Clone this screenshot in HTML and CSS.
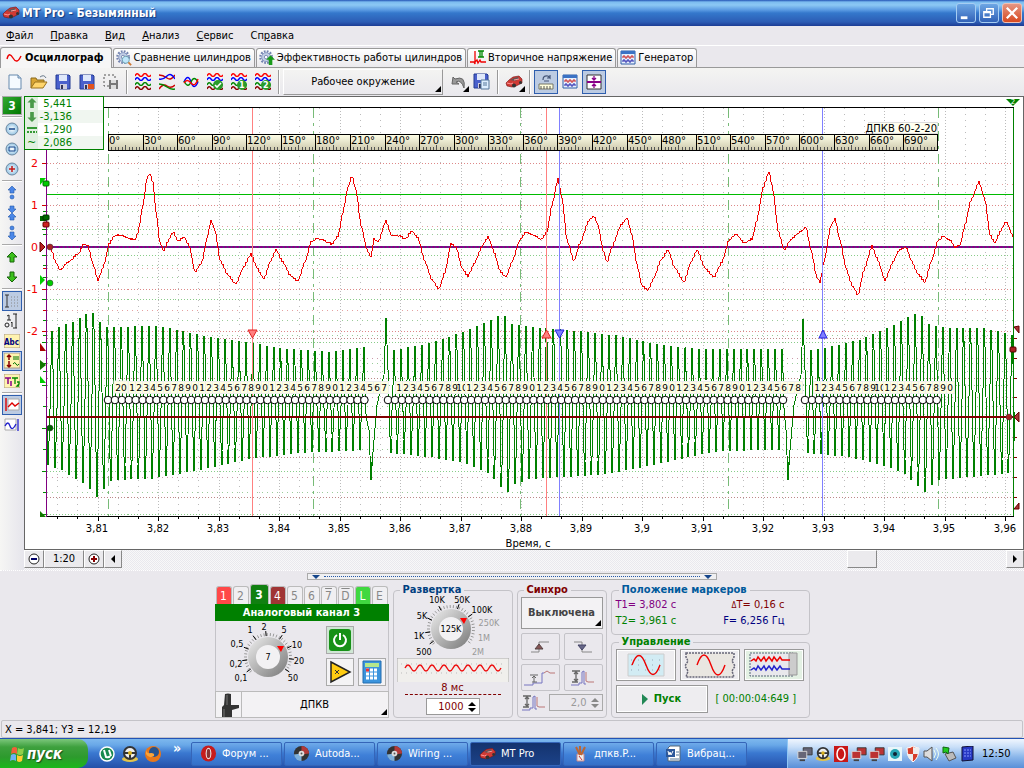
FILE: index.html
```html
<!DOCTYPE html>
<html lang="ru">
<head>
<meta charset="utf-8">
<title>MT Pro - Безымянный</title>
<link rel="stylesheet" href="styles.css">
</head>
<body>
<svg class="defs" aria-hidden="true">
  <defs>
    <linearGradient id="gGreen" x1="0" y1="0" x2="0" y2="1"><stop offset="0" stop-color="#8e8"/><stop offset="1" stop-color="#070"/></linearGradient>
    <linearGradient id="gKnob" x1="0" y1="0" x2="1" y2="1"><stop offset="0" stop-color="#eee"/><stop offset="1" stop-color="#777"/></linearGradient>
    <radialGradient id="gBall"><stop offset="0" stop-color="#fff"/><stop offset="1" stop-color="#94c4e4"/></radialGradient>
    <linearGradient id="gTooth" x1="0" y1="0" x2="0" y2="1"><stop offset="0" stop-color="#ffffe8"/><stop offset="1" stop-color="#ccc8ac"/></linearGradient>
    <symbol id="car" viewBox="0 0 18 14"><path d="M1 8l3-3 4-3 6-1 3 3v4l-6 3-4 1-5-1z" fill="#d03a34" stroke="#711" stroke-width=".6"/><path d="M5 5l4-2 4-1 1 2-4 2z" fill="#655"/><path d="M2 8l4 1 2-1M9 5l5-1" stroke="#f99" fill="none"/><circle cx="9" cy="10.500" r="2" fill="#333"/><circle cx="15.500" cy="7.500" r="1.500" fill="#333"/></symbol>
    <symbol id="gear" viewBox="0 0 18 18"><circle cx="8" cy="8" r="6.500" fill="none" stroke="#7484b0" stroke-width="2.500" stroke-dasharray="2 1.400"/><circle cx="8" cy="8" r="5" fill="#c3cfe6" stroke="#8090bd"/><circle cx="8" cy="8" r="2" fill="#fff" stroke="#7484b0"/></symbol>
    <symbol id="floppy" viewBox="0 0 16 16"><path d="M1 1h13l1 1v13H1z" fill="#4a60cc" stroke="#223a91"/><path d="M4 1h8v6H4z" fill="#dfe8fa"/><path d="M5 10h7v5H5z" fill="#ccd"/><path d="M6 11h2v4H6z" fill="#335"/></symbol>
    <symbol id="w" viewBox="0 0 16 4"><path d="M0 3Q2-1 4 2T8 2Q10-1 12 2T16 2" fill="none" stroke="currentColor" stroke-width="1.400"/></symbol>
    <symbol id="waves" viewBox="0 0 16 18"><use href="#w" y="0" width="16" height="4" color="#f00"/><use href="#w" y="4" width="16" height="4" color="#00f"/><use href="#w" y="9" width="16" height="4" color="#080"/><use href="#w" y="13" width="16" height="4" color="#800"/></symbol>
    <symbol id="genic" viewBox="0 0 16 16"><path d="M1 1h14v13H1z" fill="#e8f0fc" stroke="#2f5fa8"/><path d="M1 1h14v3H1z" fill="#3b72c4"/><path d="M3 8V6h2v2h2V6h2v2h2V6h2v2" fill="none" stroke="#c22"/><path d="M3 12v-2h2v2h2v-2h2v2h2v-2h2v2" fill="none" stroke="#22a"/></symbol>
    <symbol id="disc" viewBox="0 0 18 18"><circle cx="9" cy="9" r="8" fill="#333"/><path d="M9 1a8 8 0 0 1 8 8l-8 1z" fill="#b23a3a"/><path d="M1 10a8 8 0 0 0 8 7V9z" fill="#7eb0dc"/><circle cx="9" cy="9" r="3" fill="#ddd"/><circle cx="9" cy="9" r="1" fill="#555"/></symbol>
    <symbol id="wheel" viewBox="0 0 18 18"><ellipse cx="9" cy="14" rx="8" ry="3" fill="#e3c34b"/><circle cx="9" cy="8" r="6" fill="#eee" stroke="#333" stroke-width="2"/><path d="M3 8h12M9 8v6" stroke="#333" stroke-width="2"/><circle cx="9" cy="8" r="2" fill="#d9b120"/></symbol>
    <symbol id="net" viewBox="0 0 18 16"><path d="M7 1h10v8H7z" fill="currentColor" stroke="#333"/><path d="M1 5h10v8H1z" fill="currentColor" stroke="#ddd"/><path d="M3 15h6" stroke="#444" stroke-width="2"/></symbol>
    <symbol id="shiftarrow" viewBox="0 0 10 12"><path d="M5 0l5 5H7v6H3V5H0z"/></symbol>
    <symbol id="sync" viewBox="0 0 26 18"><path d="M1 16h8v-2h3V3" fill="none" stroke="#7774c0"/><path d="M12 3l2-1v13h2" fill="none" stroke="#7774c0"/><path d="M16 3v9l2 1h6" fill="none" stroke="#b77"/><path d="M2 2h8M2 13h6M6 3v9M4 5l2-2 2 2M4 10l2 2 2-2" fill="none" stroke="#666" stroke-width="1.300"/></symbol>
  </defs>
</svg>

<header class="titlebar">
  <svg width="18" height="14"><use href="#car"/></svg>
  <h1>MT Pro - Безымянный</h1>
  <div class="winbtns">
    <button aria-label="Свернуть"><svg viewBox="0 0 19 19"><path d="M4 13h7v3H4z" fill="#fff"/></svg></button>
    <button aria-label="Восстановить"><svg viewBox="0 0 19 19"><path d="M4 8h7v6H4zM4 9h7M7 8V5h7v6h-3M7 5h7" fill="none" stroke="#fff" stroke-width="1.400"/></svg></button>
    <button class="close" aria-label="Закрыть"><svg viewBox="0 0 19 19"><path d="M4 4l11 11M15 4L4 15" stroke="#fff" stroke-width="2.400"/></svg></button>
  </div>
</header>

<nav class="menu">
  <button><u>Ф</u>айл</button><button><u>П</u>равка</button><button><u>В</u>ид</button><button><u>А</u>нализ</button><button><u>С</u>ервис</button><button>Сп<u>р</u>авка</button>
</nav>

<div class="tabs" role="tablist">
  <button class="tab active" role="tab" aria-selected="true"><svg width="16" height="16"><path d="M1 9q2-8 6-1t8-2" fill="none" stroke="#e00" stroke-width="1.400"/></svg>Осциллограф</button>
  <button class="tab" role="tab"><svg width="16" height="16" viewBox="0 0 18 18"><use href="#gear"/><circle cx="11" cy="11" r="4" fill="#bfe6fa" stroke="#69a"/><path d="M14 14l3 3" stroke="#c73" stroke-width="2"/></svg>Сравнение цилиндров</button>
  <button class="tab" role="tab"><svg width="16" height="16" viewBox="0 0 18 18"><use href="#gear"/><use href="#shiftarrow" x="8" y="6" width="10" height="12" fill="#1a9a1a"/></svg>Эффективность работы цилиндров</button>
  <button class="tab" role="tab"><svg width="16" height="16"><path d="M0 12h4l1 2V1M5 12l2-2 1 3 2-3 1 2h5" fill="none" stroke="#e00" stroke-width="1.300"/><path d="M8 1h6M8 7h6M10 1v6M12 1v6" stroke="#080" stroke-width="1.300"/></svg>Вторичное напряжение</button>
  <button class="tab" role="tab"><svg width="16" height="16"><use href="#genic"/></svg>Генератор</button>
</div>

<div class="toolbar">
  <button class="tb" aria-label="Новый"><svg width="16" height="16"><path d="M2 1h9l3 3v11H2z" fill="#f5faff" stroke="#6789ad"/><path d="M11 1v3h3" fill="#cde" stroke="#6789ad"/></svg></button>
  <button class="tb" aria-label="Открыть"><svg width="18" height="16"><path d="M1 14V4h5l1 2h7v3" fill="#d9a533" stroke="#8a6a1c"/><path d="M1 14l4-6h12l-4 6z" fill="#ffd56b" stroke="#9a721c"/><path d="M10 3q4-3 6 1" fill="none" stroke="#678"/></svg></button>
  <button class="tb" aria-label="Сохранить"><svg width="16" height="16"><use href="#floppy"/></svg></button>
  <button class="tb" aria-label="Сохранить как"><svg width="16" height="16"><use href="#floppy"/><path d="M9 10h6v5H9z" fill="#e2531d"/></svg></button>
  <button class="tb" aria-label="Сохранить фрагмент"><svg width="16" height="16"><path d="M1 1h11v11H1z" fill="none" stroke="#555" stroke-dasharray="2 2"/><path d="M6 6h9v9H6z" fill="#777"/><path d="M8 6h5v3H8zM8 11h5v4H8z" fill="#ddd"/></svg></button>
  <i class="vsep"></i>
  <button class="tb" aria-label="Каналы"><svg width="16" height="18"><use href="#waves"/></svg></button>
  <button class="tb" aria-label="Наложение"><svg width="16" height="18"><path d="M0 2q4 0 8 3t8-3M0 16q4-6 8-3t8-1" fill="none" stroke="#c00" stroke-width="1.400"/><path d="M0 6q4 1 8-3t8 3" fill="none" stroke="#00f" stroke-width="1.400"/><path d="M0 11q4 0 8 3t8 2" fill="none" stroke="#080" stroke-width="1.400"/></svg></button>
  <button class="tb" aria-label="Совмещение"><svg width="16" height="18"><path d="M1 9q4-9 7 0t7 0" fill="none" stroke="#00f" stroke-width="1.400"/><path d="M1 8q4 8 7 1t7 0" fill="none" stroke="#080" stroke-width="1.400"/><path d="M1 10q3-5 7 0t7-4" fill="none" stroke="#f00" stroke-width="1.400"/></svg></button>
  <button class="tb" aria-label="Все каналы"><svg width="16" height="18"><use href="#waves"/><circle cx="11" cy="12" r="5" fill="#2a9b2a"/><path d="M8 12l2 2 4-4" fill="none" stroke="#fff" stroke-width="1.600"/></svg></button>
  <button class="tb" aria-label="Набор 1"><svg width="16" height="18"><use href="#waves"/><circle cx="11" cy="12" r="5" fill="#2a9b2a"/><text x="8" y="15" class="t9 wh">1</text></svg></button>
  <button class="tb" aria-label="Набор 2"><svg width="16" height="18"><use href="#waves"/><circle cx="11" cy="12" r="5" fill="#2a9b2a"/><text x="8" y="15" class="t9 wh">2</text></svg></button>
  <i class="vsep"></i>
  <button class="env corner">Рабочее окружение</button>
  <button class="tb corner gapl" aria-label="Отменить"><svg width="16" height="16"><path d="M3 3l-1 7h7L6 8q5-3 8 6 2-13-9-9z" fill="#999" stroke="#666"/></svg></button>
  <button class="tb" aria-label="Сохранить окружение"><svg width="18" height="18"><use href="#floppy" width="16" height="16"/><path d="M8 7h8v9H8z" fill="#def" stroke="#579"/><path d="M10 10h4M10 12h4" stroke="#579"/></svg></button>
  <i class="vsep"></i>
  <button class="tb corner" aria-label="Автомобиль"><svg width="18" height="14"><use href="#car"/></svg></button>
  <i class="vsep"></i>
  <button class="tb on" aria-label="Угловая линейка"><svg width="18" height="18"><path d="M6 7q0-5 5-4l2 2v-3M13 5h-3M7 8h5" fill="none" stroke="#457" stroke-width="1.200"/><path d="M2 11h14v5H2z" fill="#ffd" stroke="#776"/><path d="M4 13v3M7 13v3M10 13v3M13 13v3" stroke="#555"/></svg></button>
  <button class="tb" aria-label="Генератор"><svg width="16" height="16"><use href="#genic"/></svg></button>
  <button class="tb on" aria-label="Масштаб"><svg width="16" height="16"><path d="M1 1h14v14H1z" fill="#fff" stroke="#333"/><path d="M1 8h14" stroke="#808" stroke-width="2"/><path d="M8 2v4M8 10v4M6 4l2 2 2-2M6 12l2-2 2 2" fill="none" stroke="#808" stroke-width="1.300"/></svg></button>
</div>

<main class="work">
  <aside class="side">
    <button class="ch3">3</button><i class="hsep"></i>
    <button aria-label="Уменьшить"><svg width="14" height="14"><circle cx="7" cy="7" r="6" fill="url(#gBall)" stroke="#6c87a0"/><path d="M4 7h6" stroke="#15458a" stroke-width="1.500"/></svg></button>
    <button aria-label="По размеру"><svg width="14" height="14"><circle cx="7" cy="7" r="6" fill="url(#gBall)" stroke="#6c87a0"/><path d="M4 5h6v4H4z" fill="none" stroke="#15458a"/></svg></button>
    <button aria-label="Увеличить"><svg width="14" height="14"><circle cx="7" cy="7" r="6" fill="url(#gBall)" stroke="#6c87a0"/><path d="M4 7h6M7 4v6" stroke="#c01818" stroke-width="1.500"/></svg></button>
    <i class="hsep"></i>
    <button aria-label="Растянуть"><svg width="10" height="16" fill="#4a86e8" stroke="#2457a8" stroke-width=".6"><path d="M5 1l4 4H7v3H3V5H1z"/><circle cx="5" cy="12" r="2"/></svg></button>
    <button aria-label="Сжать"><svg width="10" height="16" fill="#4a86e8" stroke="#2457a8" stroke-width=".6"><path d="M5 8L1 4h2V1h4v3h2zM5 8l4 4H7v3H3v-3H1z"/></svg></button>
    <button aria-label="Сдвинуть"><svg width="10" height="16" fill="#4a86e8" stroke="#2457a8" stroke-width=".6"><circle cx="5" cy="3" r="2"/><path d="M5 15l-4-4h2V7h4v4h2z"/></svg></button>
    <i class="hsep"></i>
    <button aria-label="Вверх"><svg width="12" height="12"><path d="M6 1l5 5H8v5H4V6H1z" fill="#3cc01c" stroke="#17650a"/></svg></button>
    <button aria-label="Вниз"><svg width="12" height="12"><path d="M6 11L1 6h3V1h4v5h3z" fill="#3cc01c" stroke="#17650a"/></svg></button>
    <i class="hsep"></i>
    <button class="on" aria-label="Сетка"><svg width="16" height="14"><path d="M1 1h4M1 13h4M3 1v12" stroke="#333"/><path d="M7 3h8M7 6h8M7 9h8M7 12h8" stroke="#888" stroke-dasharray="1 2"/></svg></button>
    <button aria-label="Шкала"><svg width="16" height="16"><path d="M3 3l2-1v5M3 7h4M7 10l1-1v5" fill="none" stroke="#222"/><circle cx="3" cy="12" r="2" fill="none" stroke="#222"/><path d="M9 1h4M9 15h4M12 1v14" stroke="#222"/></svg></button>
    <button aria-label="Подписи"><svg width="16" height="14"><path d="M0 0h16v14H0z" fill="#fff3b0" stroke="#a98"/><text x="0" y="11" class="t8 navy">Abc</text></svg></button>
    <button class="on" aria-label="Значения"><svg width="16" height="16"><path d="M0 0h16v15H0z" fill="#fff3b0" stroke="#a98"/><path d="M5 2v5M3 4l2-2 2 2M5 8v6M3 12l2 2 2-2" fill="none" stroke="#800" stroke-width="1.500"/><path d="M9 4h6M9 6h6M9 11q2-3 3 0t3 0" fill="none" stroke="#070"/></svg></button>
    <button aria-label="Метки времени"><svg width="16" height="14"><path d="M0 0h16v14H0z" fill="#fff3b0" stroke="#a98"/><path d="M1 4h6M4 4v6M7 7v5" stroke="#808" stroke-width="1.500"/><path d="M8 4h6M11 4v6M13 8h2v2l-2 2h2" fill="none" stroke="#080" stroke-width="1.300"/></svg></button>
    <i class="hsep"></i>
    <button class="on" aria-label="Маркер слева"><svg width="16" height="16"><path d="M4 2h11v11H4z" fill="#fff" stroke="#aaa"/><path d="M2 1v13M4 10l4-4 3 3 4-3" fill="none" stroke="#d00" stroke-width="1.400"/></svg></button>
    <button aria-label="Маркер справа"><svg width="16" height="14"><path d="M1 1h11v11H1z" fill="#fff" stroke="#aaa"/><path d="M14 1v12M1 8q3-6 5 0t6-2" fill="none" stroke="#22c" stroke-width="1.300"/></svg></button>
  </aside>
  <div class="view">
    <div class="plot">
      <svg id="chart" viewBox="25 97 998 452" role="img" aria-label="Осциллограмма"></svg>
      <dl class="readout">
        <div><dt><svg width="10" height="11"><use href="#shiftarrow" fill="#4a9a4a"/></svg></dt><dd>5,441</dd></div>
        <div><dt><svg class="flip" width="10" height="11"><use href="#shiftarrow" fill="#4a9a4a"/></svg></dt><dd>-3,136</dd></div>
        <div><dt><svg width="10" height="8"><path d="M0 2h10" stroke="#393" stroke-width="2"/><path d="M0 6h10" stroke="#393" stroke-width="2" stroke-dasharray="2 1"/></svg></dt><dd>1,290</dd></div>
        <div><dt>~</dt><dd>2,086</dd></div>
      </dl>
    </div>
    <div class="scroll">
      <button aria-label="Мельче"><svg width="14" height="14"><circle cx="7" cy="7" r="5" fill="#fff" stroke="#222"/><path d="M4 7h6" stroke="#006" stroke-width="2"/></svg></button>
      <button class="ratio">1:20</button>
      <button aria-label="Крупнее"><svg width="14" height="14"><circle cx="7" cy="7" r="5" fill="#fff" stroke="#222"/><path d="M4 7h6M7 4v6" stroke="#800" stroke-width="2"/></svg></button>
      <button aria-label="Влево"><svg width="8" height="8"><path d="M6 0v8L2 4z"/></svg></button>
      <div class="track"><div class="thumb"></div></div>
      <button aria-label="Вправо"><svg width="8" height="8"><path d="M2 0v8l4-4z"/></svg></button>
    </div>
  </div>
</main>

<div class="splitter"><button aria-label="Свернуть панель"><svg width="8" height="4"><path d="M0 0h8L4 4z" fill="#15458a"/></svg><i></i><svg width="8" height="4"><path d="M0 0h8L4 4z" fill="#15458a"/></svg></button></div>

<section class="controls">
  <div class="channel">
    <div class="chtabs">
      <button class="c1">1</button><button>2</button><button class="c3">3</button><button class="c4">4</button><button>5</button><button>6</button><button class="ov">7</button><button class="ov">D</button><button class="cl">L</button><button>E</button>
    </div>
    <h2>Аналоговый канал 3</h2>
    <div class="chbody">
      <svg class="dial" id="dial1" width="108" height="69" viewBox="0 0 108 69"></svg>
      <div class="chbtns">
        <button class="pow" aria-label="Включить"><svg width="22" height="22"><rect x="0" y="0" width="22" height="22" rx="3" fill="#179117"/><path d="M8 6a6 6 0 1 0 6 0M11 4v7" fill="none" stroke="#fff" stroke-width="2"/></svg></button>
        <button class="amp" aria-label="Усиление"><svg width="24" height="24"><path d="M3 2l19 10L3 22z" fill="#fc1" stroke="#222" stroke-width="1.500"/><path d="M7 10l4 4M11 10l-4 4" stroke="#333"/></svg></button>
        <button aria-label="Калькулятор"><svg width="20" height="24"><path d="M1 1h18v22H1z" fill="#3b94dd" stroke="#246cae"/><path d="M3 3h14v4H3z" fill="#b5e88c"/><path d="M4 10h12M4 14h12M4 18h12" stroke="#fff" stroke-width="3" stroke-dasharray="3 1"/><path d="M4 10h3" stroke="#e33" stroke-width="3"/></svg></button>
      </div>
    </div>
    <button class="sensor corner"><svg width="26" height="25"><path d="M9 2q3-1 6 0v11h8v3l-7 2v7H6V15l2-2z" fill="#333"/><path d="M11 3v10M8 17v8" stroke="#777"/></svg><span>ДПКВ</span></button>
  </div>

  <fieldset class="sweep">
    <legend>Развертка</legend>
    <svg class="dial" id="dial2" width="106" height="62" viewBox="0 2 106 62"></svg>
    <svg class="strip" width="112" height="24" viewBox="0 0 112 24"><path d="M0 24V0h112v24" fill="#f0efec" stroke="#aaa"/><path d="M4 6h104M4 15h104" stroke="#bbb" stroke-dasharray="1 4"/><path d="M8 10q3-6 6 0t6 0t6 0t6 0t6 0t6 0t6 0t6 0t6 0t6 0t6 0t6 0t6 0t6 0t6 0t6 0" fill="none" stroke="#e11" stroke-width="1.400"/></svg>
    <div class="ms">8 мс</div>
    <span class="spin"><input aria-label="Длительность" value="1000"><svg width="8" height="12"><path d="M0 5h8L4 1zM0 7h8l-4 4z"/></svg></span>
  </fieldset>

  <fieldset class="syn">
    <legend>Синхро</legend>
    <button class="big corner">Выключена</button>
    <div class="grid2">
      <button aria-label="Фронт"><svg width="22" height="14"><path d="M2 12h8V2h10" fill="none" stroke="#888"/><path d="M10 4l4 5H6z" fill="#855" stroke="#544"/></svg></button>
      <button aria-label="Спад"><svg width="22" height="14"><path d="M2 2h8v10h10" fill="none" stroke="#888"/><path d="M10 10l4-5H6z" fill="#668" stroke="#446"/></svg></button>
      <button aria-label="Уровень"><svg width="34" height="18"><path d="M1 16h9v-2h9V4h2" fill="none" stroke="#7774c0"/><path d="M21 4l3-2 3 2h5" fill="none" stroke="#b77"/><path d="M7 6h8M11 7v6M9 9l2-2 2 2M9 13h5" fill="none" stroke="#666"/></svg></button>
      <button aria-label="Размах"><svg width="28" height="18"><use href="#sync"/></svg></button>
    </div>
    <div class="row"><svg width="26" height="18"><use href="#sync"/></svg><span class="spin off"><input aria-label="Порог" value="2,0" disabled><svg width="8" height="12"><path d="M0 5h8L4 1zM0 7h8l-4 4z" fill="#888"/></svg></span></div>
  </fieldset>

  <div class="rightcol">
    <fieldset class="marks">
      <legend>Положение маркеров</legend>
      <div><span class="pur">T1= 3,802 с</span><span class="dred"><small>Δ</small>T= 0,16 с</span></div>
      <div><span class="grn">T2= 3,961 с</span><span class="navy">F= 6,256 Гц</span></div>
    </fieldset>
    <fieldset class="ctl">
      <legend>Управление</legend>
      <div class="three">
        <button aria-label="Однократно"><svg width="38" height="24"><path d="M1 1h36v22H1z" fill="#d2ecf4" stroke="#ccc"/><path d="M4 7h30M4 12h30M4 17h30" stroke="#9ab" stroke-dasharray="1 6"/><path d="M5 12q7-19 14 0t14 0" fill="none" stroke="#e00" stroke-width="1.400"/></svg></button>
        <button aria-label="Запись"><svg width="52" height="26"><path d="M2 1h48v4l-2 4 3 5-3 5 2 6H2l2-6-3-5 3-5-2-4z" fill="#e9e6e1" stroke="#667" stroke-width="1.500" stroke-dasharray="2 1"/><path d="M13 13q7-20 14 0t14 0" fill="none" stroke="#e00" stroke-width="1.400"/></svg></button>
        <button class="lit" aria-label="Самописец"><svg width="52" height="26"><path d="M2 1h43v23H2z" fill="#e8e8ec" stroke="#567" stroke-dasharray="2 1"/><path d="M41 1h8v22h-8z" fill="#ccc" stroke="#999"/><path d="M3 9l3-2 2 2 2-4 3 4 3-4 2 4 3-4 3 4 2-4 3 4 3-4 2 3h8" fill="none" stroke="#e00" stroke-width="1.500"/><path d="M3 18l3-2 2 2 2-4 3 4 3-4 2 4 3-4 3 4 2-4 3 4 3-4 2 3h8" fill="none" stroke="#22c" stroke-width="1.500"/></svg></button>
      </div>
      <div class="go"><button><svg width="6" height="11"><path d="M0 0l6 5-6 6z" fill="#285"/></svg>Пуск</button><span>[ 00:00:04:649 ]</span></div>
    </fieldset>
  </div>
</section>

<div class="status">X = 3,841; Y3 = 12,19</div>

<footer class="taskbar">
  <button class="start"><svg width="18" height="18"><path d="M3 3q3-2 5 0v6q-3-2-6 0z" fill="#f0603a"/><path d="M9 3q3 2 6 0l-1 6q-3 2-6 0z" fill="#8fd04a"/><path d="M2 10q3-2 5 0v6q-3-2-6 0z" fill="#6db1f5"/><path d="M8 10q3 2 6 0l-1 6q-3 2-5 0z" fill="#fc3"/></svg>пуск</button>
  <div class="quick">
    <a href="#" aria-label="uTorrent"><svg width="18" height="18"><circle cx="9" cy="9" r="7" fill="#18894f" stroke="#fff" stroke-width="1.500"/><path d="M6 5l2 7q3 1 4-1M11 5l2 6" fill="none" stroke="#fff" stroke-width="2"/></svg></a>
    <a href="#" aria-label="Руль"><svg width="18" height="18"><use href="#wheel"/></svg></a>
    <a href="#" aria-label="Firefox"><svg width="18" height="18"><circle cx="9" cy="9" r="8" fill="#e8771a"/><circle cx="10" cy="7" r="5" fill="#25538f"/><path d="M2 4q0 5 5 4 4 0 3 3-5 3-8-2z" fill="#f9a43a"/></svg></a>
    <span>»</span>
  </div>
  <div class="tasks">
    <button><svg width="17" height="17" viewBox="0 0 18 18"><ellipse cx="9" cy="9" rx="8" ry="8.500" fill="#c61c1c"/><ellipse cx="9" cy="9" rx="3" ry="6" fill="#fff"/><ellipse cx="9" cy="9" rx="2" ry="5" fill="#833"/></svg>Форум ...</button>
    <button><svg width="17" height="17"><use href="#disc"/></svg>Autoda...</button>
    <button><svg width="17" height="17"><use href="#disc"/></svg>Wiring ...</button>
    <button class="cur"><svg width="17" height="14"><use href="#car"/></svg>MT Pro</button>
    <button><svg width="17" height="17"><path d="M5 9h7v7H5z" fill="#eee" stroke="#c88"/><path d="M4 2l4 8M8 1v9M13 2l-4 8" stroke="#b63" stroke-width="2"/><path d="M7 11l3 4" stroke="#c33"/></svg>дпкв.P...</button>
    <button><svg width="17" height="17"><path d="M5 1h10v15H3V3z" fill="#fff" stroke="#567"/><path d="M1 4h9v8H1z" fill="#2b579a"/><path d="M3 6l1 4 1-3 1 3 2-4" fill="none" stroke="#fff"/><path d="M11 7h3M11 10h3M5 14h9" stroke="#579"/></svg>Вибрац...</button>
  </div>
  <div class="tray">
    <svg width="16" height="16" color="#667"><use href="#net"/></svg>
    <svg width="16" height="16"><use href="#wheel"/></svg>
    <svg width="16" height="16"><path d="M1 0h14v16H1z" fill="#c81818"/><ellipse cx="8" cy="8" rx="4" ry="6" fill="none" stroke="#fff" stroke-width="1.500"/></svg>
    <svg width="16" height="16" color="#b33"><use href="#net"/></svg>
    <svg width="16" height="16" color="#b33"><use href="#net"/></svg>
    <svg width="16" height="16"><path d="M1 1h14v14H1z" fill="#e8f6fa"/><circle cx="8" cy="8" r="5" fill="#29a6b4"/><circle cx="8" cy="8" r="2" fill="#123"/></svg>
    <svg width="16" height="16"><path d="M2 2q3 0 6-2 3 2 6 2 0 10-6 14Q2 12 2 2z" fill="#d63f2b" stroke="#fff"/><path d="M8 1v7h6q0-4 0-6-3 0-6-1zM8 8H2q1 5 6 7z" fill="#eee"/></svg>
    <svg width="16" height="16"><path d="M1 5h3l5-4v14l-5-4H1z" fill="#ddd" stroke="#555"/><path d="M11 4q3 4 0 8M13 2q5 6 0 12" fill="none" stroke="#efe"/></svg>
    <svg width="16" height="16"><path d="M4 8l8-2 3 6-7 3z" fill="#bbb" stroke="#555"/><path d="M2 1l6 1-1 6-2-2-3 1z" fill="#2c2" stroke="#161"/></svg>
    <svg width="16" height="16"><path d="M3 1l11-1v14l-11 1z" fill="#2738c4" stroke="#113"/><path d="M5 4h7M5 7h7M5 10h7" stroke="#89f" stroke-dasharray="2 1"/></svg>
    <time>12:50</time>
  </div>
</footer>
<script src="chart.js"></script>
</body>
</html>
```
FILE: styles.css
```css
* { box-sizing: border-box; }
body { margin: 0; min-height: 100vh; display: flex; flex-direction: column; background: #eae8ed; color: #000; font: 11px/14px "DejaVu Sans Condensed", "DejaVu Sans", sans-serif; overflow: hidden; }
button { font: inherit; color: inherit; border: 0; background: none; padding: 0; margin: 0; display: flex; align-items: center; justify-content: center; }
svg { display: block; flex: none; }
.defs { position: absolute; width: 0; height: 0; }
fieldset { margin: 0; min-width: 0; }
.t8 { font-size: 8px; font-weight: bold; }
.t9 { font-size: 9px; }
.wh { fill: #fff; font-weight: bold; }
.navy { color: #000080; fill: #000080; }
.pur { color: #800080; fill: #800080; }
.grn { color: #008000; fill: #008000; }
.dred { color: #800000; }

.titlebar { height: 26px; display: flex; align-items: center; gap: 2px; padding: 0 2px; background: linear-gradient(#2353b5 0, #7cbcf0 2px, #8cc8f4 5px, #5a9ae2 10px, #3478cc 13px, #2c5cb4 22px, #1c3c94 26px); }
.titlebar h1 { margin: 0; flex: 1; color: #fff; font: bold 12px/16px "DejaVu Sans Condensed", sans-serif; text-shadow: 1px 1px 1px #123a80; }
.winbtns { display: flex; gap: 3px; }
.winbtns button { width: 20px; height: 20px; border: 1px solid #a6cdf2; border-radius: 3px; background: linear-gradient(#6da6e4, #3162b8); }
.winbtns .close { background: linear-gradient(#e49683, #d8491f); border-color: #f0c0b4; }

.menu { height: 20px; display: flex; gap: 17px; padding: 0 6px; border-bottom: 1px solid #fff; }

.tabs { height: 22px; display: flex; align-items: flex-end; gap: 1px; border-bottom: 1px solid #999; }
.tab { height: 19px; gap: 2px; padding: 0 3px 0 2px; background: linear-gradient(#fff, #ebeaed); border: 1px solid #999; border-bottom: 0; border-radius: 3px 3px 0 0; }
.tab.active { height: 21px; margin-bottom: -1px; font-weight: bold; gap: 3px; padding: 0 7px 0 5px; background: #f6f6f6; }

.toolbar { height: 28px; display: flex; align-items: center; padding: 0 3px; background: linear-gradient(#f4f4f2, #e9e8ed); }
.tb { width: 24px; height: 24px; }
.on { background: #bccbe2; border: 1px solid #2f5fae; }
.vsep { width: 2px; height: 24px; margin: 0 3px; border-left: 1px solid #999; border-right: 1px solid #fff; }
.env { width: 160px; height: 26px; border-right: 1px solid #999; border-bottom: 1px solid #999; border-left: 1px solid #fff; border-top: 1px solid #fff; }
.corner { position: relative; }
.corner::after { content: ""; position: absolute; right: 1px; bottom: 2px; border: 3px solid #000; border-top-color: transparent; border-left-color: transparent; }
.gapl { margin-left: 3px; }

.work { flex: 1; display: flex; min-height: 0; }
.side { width: 24px; display: flex; flex-direction: column; align-items: center; background: linear-gradient(90deg, #f6f6f4, #e6e5ec); }
.side button { width: 20px; height: 20px; flex: none; }
.side .ch3 { height: 19px; background: linear-gradient(135deg, #3a3, #070); border: 1px solid #aaa; color: #fff; font-weight: bold; font-size: 12px; }
.hsep { width: 20px; height: 2px; margin: 1px 0; flex: none; border-top: 1px solid #aaa; border-bottom: 1px solid #fff; }
.view { flex: 1; display: flex; flex-direction: column; min-width: 0; }
.plot { flex: 1; position: relative; min-height: 0; background: #fff; border: 1px solid #666; }
#chart { width: 100%; height: 100%; }
#chart text, .readout { font-family: "DejaVu Sans", sans-serif; }
.crisp { shape-rendering: crispEdges; }
.readout { position: absolute; left: -1px; top: -1px; width: 80px; margin: 0; border: 1px solid #008000; background: #fff; color: #008000; }
.readout div { display: flex; height: 13px; align-items: center; }
.readout div:nth-child(even) { background: #f0f6f0; }
.readout dt { width: 13px; height: 13px; display: flex; justify-content: center; align-items: center; background: #e0efe0; }
.readout dd { display: flex; justify-content: flex-end; margin: 0; width: 34px; white-space: nowrap; font-size: 10px; }
.flip { transform: rotate(180deg); }
.scroll { height: 20px; display: flex; background: repeating-conic-gradient(#f8f8f8 0 25%, #e9e8ee 0 50%) 0 0 / 2px 2px; }
.scroll button, .thumb { width: 18px; height: 18px; background: #ebeaed; border: 1px solid #fff; border-right-color: #888; border-bottom-color: #888; }
.scroll button:first-child, .scroll button:nth-child(3) { width: 20px; }
.scroll .ratio { width: 40px; }
.track { flex: 1; display: flex; }
.thumb { width: 30px; margin-left: 82%; }

.splitter { height: 14px; display: flex; justify-content: center; align-items: flex-end; padding-bottom: 4px; border-top: 1px dotted #fff; }
.splitter button { width: 410px; height: 7px; padding: 0 4px; gap: 4px; border: 1px solid #aaa; background: #f0f0f2; }
.splitter i { flex: 1; border-top: 1px dotted #2457a8; }

.controls { display: flex; justify-content: center; gap: 4px; height: 134px; }
.controls legend { font-weight: bold; line-height: 12px; padding: 0 3px; margin-left: 3px; }
.controls fieldset { border: 1px solid #c4c3c8; border-radius: 4px; }
.channel { width: 174px; display: flex; flex-direction: column; }
.chtabs { display: flex; align-items: flex-end; gap: 1px; height: 20px; padding: 0 1px; }
.chtabs button { flex: 1; height: 18px; color: #888; font-size: 12px; border: 1px solid #bbb; border-bottom: 0; border-radius: 3px 3px 0 0; background: #f0eff2; }
.chtabs .c1 { background: #ff4848; color: #fff; }
.chtabs .c3 { flex: none; width: 19px; height: 20px; background: #118011; color: #fff; font-weight: bold; }
.chtabs .c4 { background: #a03535; color: #fff; }
.chtabs .cl { background: #40d840; color: #fff; }
.ov { text-decoration: overline; }
.channel h2 { margin: 0; height: 17px; background: #008000; color: #fff; text-align: center; font: bold 11px/18px "DejaVu Sans Condensed", sans-serif; }
.chbody { flex: 1; display: flex; padding: 0 2px; border: 1px solid #c4c3c8; border-width: 0 1px; }
.dial text { font-size: 9px; }
.chbtns { flex: 1; display: grid; grid-template-columns: 28px 28px; gap: 4px; align-content: center; }
.chbtns button { height: 28px; border: 1px solid #aaa; background: #f4f3f5; }
.chbtns .pow { background: #cfe6d4; }
.chbtns .amp { grid-column: 1; }
.sensor { height: 27px; border: 1px solid #bbb; background: #f3f2f4; }
.sensor svg { border-right: 1px solid #bbb; }
.sensor span { flex: 1; }
.sweep { width: 120px; padding: 0 3px; display: flex; flex-direction: column; align-items: center; }
.sweep legend { color: #004080; }
.ms { color: #800000; width: 96px; text-align: center; line-height: 11px; padding-bottom: 1px; border-bottom: 1px dashed #800000; }
.spin { display: flex; align-items: center; width: 54px; height: 17px; margin-top: 3px; padding-right: 3px; background: #fff; border: 1px solid #999; }
.spin input { flex: 1; min-width: 0; width: 0; border: 0; padding: 0 4px; background: none; text-align: right; font: inherit; color: #800000; }
.spin.off { background: #eae8ed; border-color: #aaa; margin: 0; }
.spin.off input { color: #999; }
.syn { width: 90px; padding: 1px 3px 0; }
.syn legend { color: #800000; }
.big { width: 100%; height: 32px; font-weight: bold; color: #444; border: 1px solid #999; background: #f3f2f4; }
.grid2 { display: grid; grid-template-columns: 1fr 1fr; gap: 4px; margin: 4px 0 3px; }
.grid2 button { height: 27px; border: 1px solid #c4c3c8; border-radius: 2px; }
.row { display: flex; gap: 2px; }
.rightcol { width: 199px; display: flex; flex-direction: column; gap: 1px; }
.marks { height: 51px; padding: 2px 4px 0; }
.marks legend { color: #005a9c; }
.marks div { display: flex; justify-content: space-between; height: 16px; padding-right: 20px; }
.marks small { font-size: 8px; }
.ctl { flex: 1; padding: 1px 4px 0; }
.ctl legend { color: #008000; }
.three { display: grid; grid-template-columns: repeat(3, 1fr); gap: 4px; }
.three button, .go button { height: 32px; border: 1px solid #999; box-shadow: inset 0 0 0 1px #fff; background: #eeedf0; }
.three .lit { background: #e4f1e4; }
.go { display: flex; align-items: center; gap: 8px; margin-top: 4px; color: #008000; }
.go button { width: 92px; height: 28px; gap: 6px; font-weight: bold; font-size: 11px; }
.status { height: 18px; margin: 2px 1px 0; padding: 0 3px; line-height: 17px; border: 1px solid #c4c3c8; border-radius: 2px; }

.taskbar { height: 30px; display: flex; color: #fff; border-top: 1px solid #2353b5; background: linear-gradient(#7db8ee, #69a8e8 6px, #3a78d0 14px, #2f63bc 22px, #2450a8); }
.start { width: 88px; justify-content: flex-start; padding-left: 9px; font: italic bold 15px/18px "DejaVu Sans Condensed", sans-serif; text-shadow: 1px 1px 1px #1a4a1a; border-radius: 0 10px 10px 0; background: linear-gradient(#7cc77c, #3ea03e 8px, #2d9a2d 18px, #1ab81a); }
.quick { display: flex; align-items: center; gap: 5px; width: 103px; padding-left: 10px; }
.quick span { font-weight: bold; font-size: 14px; margin: 0 0 12px 6px; }
.tasks { flex: 1; display: flex; align-items: center; gap: 2px; }
.tasks button { width: 91px; height: 24px; justify-content: flex-start; gap: 5px; padding-left: 8px; border: 1px solid #3565b8; border-radius: 2px; background: linear-gradient(#6fabea, #3f80d8 12px, #3570c8); white-space: nowrap; }
.tasks .cur { background: linear-gradient(#14336e, #1c4288); }
.tray { width: 237px; display: flex; align-items: center; gap: 2px; padding-left: 9px; color: #000; border-left: 1px solid #8ec6f4; background: linear-gradient(#f0f6fe, #c9dff8 8px, #8ab6ea 18px, #5a8fd8); }
.tray time { margin-left: 5px; }
```
FILE: chart.js
```js
(function () {
  var out = [];
  function add(s) { out.push(s); }
  function line(x1, y1, x2, y2, c, w, dash) {
    add('<path d="M' + x1 + ' ' + y1 + 'L' + x2 + ' ' + y2 + '" stroke="' + c + '" stroke-width="' + (w || 1) + '"' + (dash ? ' stroke-dasharray="' + dash + '"' : '') + '/>');
  }
  function text(x, y, s, c, size, anchor) {
    add('<text x="' + x + '" y="' + y + '" fill="' + c + '" font-size="' + size + '" text-anchor="' + (anchor || 'middle') + '">' + s + '</text>');
  }
  function poly(p, fill, stroke) { add('<path d="' + p + 'z" fill="' + fill + '" stroke="' + (stroke || 'none') + '"/>'); }
  function at(tbl, x) {
    for (var i = 1; i < tbl.length; i++) if (x <= tbl[i][0]) {
      var a = tbl[i - 1], b = tbl[i];
      return a[1] + (b[1] - a[1]) * (x - a[0]) / (b[0] - a[0]);
    }
    return tbl[tbl.length - 1][1];
  }
  var L = 46.5, R = 1013.5, T = 107.5, B = 516.5, k, x, y;

  add('<g class="crisp" fill="none">');
  for (k = -2; k < 46; k++) {
    x = Math.round(97.5 + k * 60.5 / 3) + 0.5;
    if (x < 50 || x > 1010) continue;
    line(x, T, x, B, '#bbb', 1, k % 3 ? '1 5' : '1 2');
    line(x, B, x, B + (k % 3 ? 2 : 4), '#000');
  }
  [163, 205, 289, 331].forEach(function (v) { line(L, v + .5, R, v + .5, '#d88', 1, '1 2'); line(42, v + .5, 46, v + .5, '#c00'); });
  [184, 226, 268, 310].forEach(function (v) { line(L, v + .5, R, v + .5, '#e6a0a0', 1, '1 4'); line(43, v + .5, 46, v + .5, '#c00'); });
  [338, 378, 457, 497].forEach(function (v) { line(L, v + .5, R, v + .5, '#b88', 1, '1 2'); line(R, v + .5, 1017, v + .5, '#800'); });
  [358, 397, 437, 477].forEach(function (v) { line(L, v + .5, R, v + .5, '#c9a', 1, '1 4'); line(R, v + .5, 1017, v + .5, '#800'); });
  [229, 255, 299, 342, 385, 428, 471, 514].forEach(function (v) { line(L, v + .5, R, v + .5, '#8c8', 1, '1 2'); line(42, v + .5, 46, v + .5, '#080'); });
  [211, 234, 265, 277, 320, 335, 363, 371, 406, 449, 492].forEach(function (v) { line(L, v + .5, R, v + .5, '#9c9', 1, '1 4'); line(43, v + .5, 46, v + .5, '#080'); });
  [108, 313, 520, 728, 938].forEach(function (v) { line(v + .5, T, v + .5, B, '#7b7', 1, '10 5 3 5'); });

  line(L, 194.5, R, 194.5, '#0b0');
  line(L, 247, R, 247, '#808', 2);
  line(L, 247, R, 247, '#447', 2, '1 3');

  var top = [[46,334],[58,327],[72,322],[92,311],[99,321],[106,327],[160,326],[200,335],[240,341],[280,348],[330,352],[366,347],[367,350],[394,350],[420,345],[450,337],[480,325],[503,314],[512,324],[530,327],[580,331],[620,336],[660,345],[700,349],[780,349],[812,350],[840,345],[865,338],[890,327],[918,312],[930,325],[950,328],[985,328],[1013,335]];
  var bot = [[46,464],[62,470],[75,478],[88,486],[97,497],[104,489],[112,480],[150,479],[200,470],[250,459],[300,453],[366,450],[391,453],[430,457],[465,463],[490,474],[508,493],[516,484],[530,479],[600,475],[640,468],[680,459],[720,451],[780,450],[808,453],[850,457],[885,466],[905,474],[926,492],[938,480],[960,478],[1013,473]];
  var d = '', caps = '', p = 6.93;
  function tooth(c) {
    var t = at(top, c), b = at(bot, c - 3);
    d += 'L' + (c - 3.5) + ' ' + b + 'L' + (c - 2.6) + ' ' + (b - 30) + 'L' + (c - 1.4) + ' 397L' + (c - .6) + ' ' + (t + 25) + 'L' + c + ' ' + t + 'L' + (c + .9) + ' ' + (t + 22) + 'L' + (c + 2) + ' 410L' + (c + 2.7) + ' ' + (b - 32);
    caps += 'M' + c + ' ' + t + 'v14M' + (c - 3.5) + ' ' + b + 'v-14';
  }
  d = 'M46 395';
  for (x = 51.8; x < 368; x += p) tooth(x);
  d += 'L369 430L371 480L373 452L377 405L384 375L386 318L388 370';
  caps += 'M371 480v-18M386 318v22';
  for (x = 394; x < 785; x += p) tooth(x);
  d += 'L786 430L788 480L790 450L794 405L801 375L803 319L805 370';
  caps += 'M788 480v-18M803 319v22';
  for (x = 811; x < 1013; x += p) tooth(x);
  add('<path d="' + d + '" stroke="#008000"/><path d="' + caps + '" stroke="#008000" stroke-width="2"/>');
  line(L, 417, R, 417, '#800000', 2);

  var pts = '46,245 51,249 56,263 60,270 68,262 78,254 84,244 88,246 93,264 98,280 104,265 109,244 114,236 120,235 128,238 135,240 138,232 143,205 147,178 150,174 153,183 156,212 160,243 164,251 168,241 173,232 178,241 184,237 189,245 195,272 202,262 207,238 211,221 215,230 220,260 228,275 236,284 243,268 251,254 257,268 264,279 270,262 276,250 283,262 290,275 298,281 305,262 311,242 317,238 323,240 332,244 338,236 343,212 348,187 352,176 356,190 361,225 367,250 371,257 374,239 378,242 386,221 391,235 400,236 405,239 412,231 418,238 425,262 432,280 439,289 445,272 451,244 456,247 462,268 468,276 475,262 482,246 488,237 494,252 500,271 506,277 512,262 520,240 526,232 533,235 541,239 547,232 552,205 558,179 562,198 567,240 574,261 580,243 589,220 594,216 598,225 603,250 607,262 612,247 621,225 627,218 632,235 637,265 642,286 648,290 654,278 661,260 668,250 675,268 684,282 691,262 697,250 705,268 714,277 722,262 729,240 736,234 744,243 752,239 757,220 763,188 769,172 773,190 778,230 784,250 792,238 800,232 806,227 811,250 817,278 820,282 824,262 831,225 835,219 840,240 846,268 852,285 858,295 864,270 872,246 877,258 885,280 893,262 899,250 906,247 912,262 918,274 925,282 931,262 938,241 943,236 950,240 955,247 960,245 965,225 971,200 979,182 985,200 990,235 995,243 1000,232 1006,221 1013,236'.split(' ').map(function (s) { return s.split(',').map(Number); });
  var red = '', prev = null;
  for (x = 46; x <= 1013; x++) {
    var i = 1;
    while (pts[i][0] < x) i++;
    var a = pts[i - 1], b = pts[i], u = (x - a[0]) / (b[0] - a[0]);
    u = u * u * (3 - 2 * u) * .5 + u * .5;
    y = Math.round(a[1] + (b[1] - a[1]) * u + Math.sin(x * 2.7) * .9);
    red += (prev === null ? 'M' : 'L') + x + ' ' + y;
    prev = y;
  }
  add('<path d="' + red + '" stroke="#f00000"/>');

  line(252.5, T, 252.5, B, '#ff8080'); line(546.5, T, 546.5, B, '#ff8080');
  line(559.5, T, 559.5, B, '#8080ff'); line(822.5, T, 822.5, B, '#8080ff');
  line(104, T, R, T, '#000');
  line(L, 145, L, B, '#800080');
  line(R, T, R, B, '#008000');
  line(L, B, R, B, '#000');
  add('</g>');
  poly('M248 330h9l-4.500 8', '#ff8080', '#e02020'); poly('M542 338h9l-4.500-8', '#ff8080', '#e02020');
  poly('M555 330h9l-4.500 8', '#8080ff', '#2020e0'); poly('M819 338h8l-4-8', '#8080ff', '#2020e0');

  function boxes(from, n, first) {
    for (var j = 0; j < n; j++) {
      var v = j + 1, cx = from + j * 7;
      add('<rect class="crisp" x="' + (cx - 4) + '" y="381" width="8" height="12" fill="#ffffe1" stroke="#eee"/>');
      text(cx, 391, v === 10 && first ? '10' : v % 10, '#000', 9);
    }
  }
  add('<rect x="114" y="381" width="14" height="12" fill="#ffffe1" stroke="#eee"/>');
  text(121, 391, '20', '#000', 9);
  boxes(132, 37); boxes(399, 58, 1); boxes(817, 20, 1);
  [[108, 371], [388, 788], [805, 939]].forEach(function (r) {
    for (var c = r[0]; c < r[1]; c += p) add('<circle cx="' + c + '" cy="400" r="3.8" fill="#fff" stroke="#000"/>');
  });

  add('<g class="crisp"><rect x="108.5" y="134.500" width="829" height="16" fill="url(#gTooth)" stroke="#000"/>');
  for (k = 0; k < 24; k++) {
    x = 108 + k * 34.57;
    if (k) line(Math.round(x) + .5, 134, Math.round(x) + .5, 150, '#000');
    for (var m = 1; m < 10; m++) line(Math.round(x + m * 3.457) + .5, m === 5 ? 145 : 147, Math.round(x + m * 3.457) + .5, 150, '#555');
  }
  add('<rect x="868.5" y="122.500" width="69" height="11" fill="#fffff0" stroke="#ddd"/></g>');
  for (k = 0; k < 24; k++) text(Math.round(109 + k * 34.57), 144, k * 30 + '°', '#000', 10, 'start');
  text(937, 132, 'ДПКВ 60-2-20', '#000', 10, 'end');

  for (k = 0; k < 16; k++) text(Math.round(97 + k * 60.5), 532, '3,' + (k % 10 === 9 ? (81 + k) / 10 : 81 + k), '#000', 10);
  text(528, 547, 'Время, с', '#000', 10);
  [[2, 167], [1, 209], [0, 251], [-1, 293], [-2, 335]].forEach(function (t) { text(38, t[1], t[0], '#f00000', 11, 'end'); });

  poly('M40 178h6l-6 7', '#0c0'); poly('M40 216h6v5h-6', '#060'); poly('M40 242v10l5-5', '#b22', '#600');
  poly('M40 275v10l5-5', '#0c0'); poly('M40 343v8h6', '#a00'); poly('M40 360v10l6-5', '#170'); poly('M40 376v7h6', '#0c0'); poly('M40 511v6h6', '#170');
  poly('M1019 326v7l-5-6', '#a33', '#600'); poly('M1019 412v10l-5-5', '#a33', '#600'); poly('M1019 503v6h-5', '#a33', '#600');
  [[46, 183, '#0c0', '#060'], [46, 217, '#060', '#030'], [46, 224, '#c22', '#600'], [1013, 349, '#a22', '#500']].forEach(function (m) {
    add('<rect x="' + (m[0] - 3) + '" y="' + (m[1] - 2) + '" width="6" height="5" rx="1" fill="' + m[2] + '" stroke="' + m[3] + '"/>');
  });
  [[50, 247, '#a22'], [50, 283, '#0c0'], [50, 428, '#060'], [1009, 417, '#a22']].forEach(function (m) {
    add('<circle cx="' + m[0] + '" cy="' + m[1] + '" r="3" fill="' + m[2] + '" stroke="#333" stroke-width=".5"/>');
  });
  poly('M1006 99h14l-7 7', '#008000'); text(1013, 104, '2', '#fff', 7);
  document.getElementById('chart').innerHTML = out.join('');

  function dial(id, cx, cy, r, mid, labels, ticks) {
    out = [];
    for (var g = -220; g <= 40; g += 8) {
      var q = g * Math.PI / 180;
      line(cx + (r + 1) * Math.cos(q), cy + (r + 1) * Math.sin(q), cx + (r + 4) * Math.cos(q), cy + (r + 4) * Math.sin(q), '#999');
    }
    ticks.forEach(function (g) {
      var q = g * Math.PI / 180;
      line(cx + (r + 1) * Math.cos(q), cy + (r + 1) * Math.sin(q), cx + (r + 6) * Math.cos(q), cy + (r + 6) * Math.sin(q), '#000');
    });
    add('<circle cx="' + cx + '" cy="' + cy + '" r="' + r + '" fill="url(#gKnob)"/><circle cx="' + cx + '" cy="' + cy + '" r="12" fill="#f2f1f3"/>');
    poly('M' + (cx + 9) + ' ' + (cy - 11) + 'l7 0l-3 6', '#f00');
    text(cx, cy + 3, mid, '#000', 9);
    labels.forEach(function (l) { text(l[0], l[1], l[2], l[3] || '#000', 9); });
    document.getElementById(id).innerHTML = out.join('');
  }
  dial('dial1', 50, 36, 20, '7', [[23, 60, '0,1'], [18, 46, '0,2'], [19, 26, '0,5'], [32, 12, '1'], [46, 9, '2'], [66, 12, '5'], [79, 27, '10'], [81, 43, '20'], [75, 60, '50']], [-215, -188, -158, -125, -95, -57, -25, 5, 35]);
  dial('dial2', 51, 35, 20, '125K', [[24, 61, '500'], [19, 45, '1K'], [22, 25, '5K'], [37, 9, '10K'], [62, 9, '50K'], [82, 19, '100K'], [89, 32, '250K', '#999'], [84, 47, '1M', '#999'], [78, 61, '2M', '#999']], [-215, -188, -155, -118, -72, -35]);
})();
```
